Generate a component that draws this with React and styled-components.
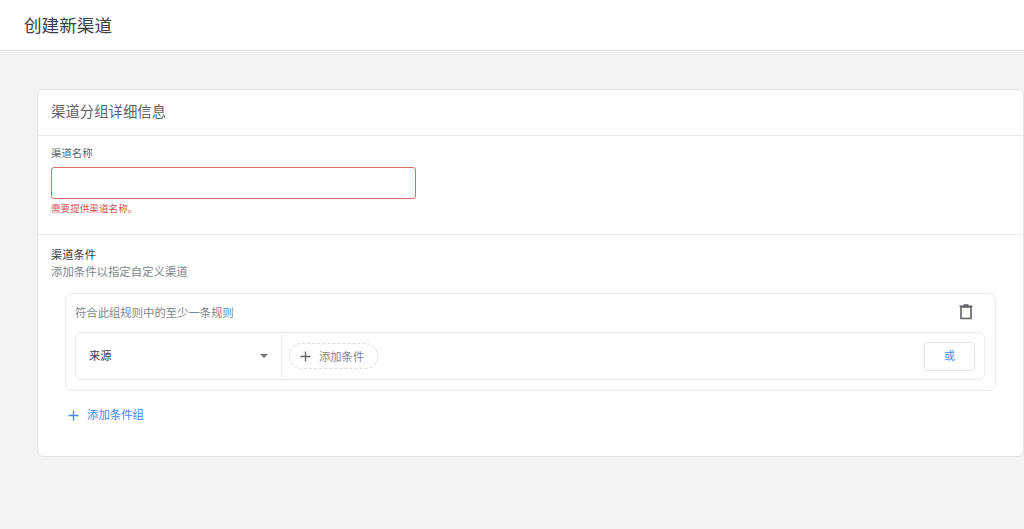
import React from "react";
import styled, { createGlobalStyle } from "styled-components";

const Global = createGlobalStyle`
  html, body { margin: 0; padding: 0; height: 100%; overflow: hidden; background: #f1f3f4; }
  * { box-sizing: border-box; }
  body { font-family: Roboto, "Noto Sans CJK SC", sans-serif; }
`;
const Page = styled.div`height: 529px; background: #f1f3f4;`;
const Header = styled.header`
  height: 51px; background: #fff; border-bottom: 1px solid #e4e5e7;
  padding: 0 0 0 24px; display: flex; align-items: center;
`;
const PageTitle = styled.h1`
  margin: 0 0 2px; font-size: 17.6px; font-weight: 400; color: #3c4043;
`;
const Card = styled.section`
  margin: 38px 0 0 37px; height: 368px; background: #fff;
  border: 1px solid #e3e4e6; border-radius: 6px;
`;
const CardTitle = styled.h2`
  margin: 0; height: 46px; padding: 0 13px 5px; display: flex; align-items: center;
  font-size: 14.4px; font-weight: 400; color: #5f6368;
  border-bottom: 1px solid #e8eaed;
`;
const NameSection = styled.div`
  height: 99px; padding: 11px 13px 0; border-bottom: 1px solid #e8eaed;
`;
const FieldLabel = styled.div`
  font-size: 10.4px; line-height: 14px; color: #5f6368;
`;
const TextInput = styled.input`
  display: block; margin-top: 6px; width: 365px; height: 32px; padding: 0 8px;
  border: 1px solid #df6b67; border-radius: 3px; background: #fff; outline: none;
`;
const ErrorText = styled.div`
  margin-top: 3px; font-size: 9.6px; line-height: 14px; color: #d9534f;
`;
const ConditionSection = styled.div`padding: 13px 13px 0;`;
const SectionTitle = styled.div`
  font-size: 11.25px; line-height: 16px; color: #3c4043;
`;
const SectionHint = styled.div`
  font-size: 11.4px; line-height: 16px; color: #80868b;
`;
const GroupBox = styled.div`
  margin: 13px 14px 0 14px; height: 98px; padding: 0 10px 0 9px;
  border: 1px solid #e8eaed; border-radius: 7px;
`;
const GroupHead = styled.div`
  height: 38px; display: flex; align-items: center; justify-content: space-between;
  padding: 0 12px 2px 0;
`;
const GroupText = styled.span`font-size: 11.35px; color: #80868b;`;
const IconButton = styled.span`display: flex; color: #5f6368;`;
const RuleRow = styled.div`
  height: 48px; display: flex; align-items: center;
  border: 1px solid #e8eaed; border-radius: 6px;
`;
const SourceSelect = styled.div`
  width: 206px; height: 100%; padding: 0 13px 2px; display: flex; align-items: center;
  justify-content: space-between; border-right: 1px solid #e8eaed;
  font-size: 11.25px; color: #3c4043;
`;
const Caret = styled.span`
  width: 0; height: 0; margin-top: 2px; border-left: 4px solid transparent; border-right: 4px solid transparent;
  border-top: 4px solid #70757a;
`;
const AddPill = styled.button`
  margin-left: 7px; width: 89px; height: 26px; padding: 0 0 0 10px; display: flex; align-items: center; gap: 8px;
  background: #fff; border: 1px dashed #dadce0; border-radius: 13px;
  font: inherit; font-size: 11.3px; color: #80868b;
`;
const OrButton = styled.button`
  margin-left: auto; margin-right: 9px; width: 51px; height: 29px; padding: 0 0 2px; background: #fff;
  border: 1px solid #e3e4e6; border-radius: 3px; font: inherit; font-size: 11px; color: #4285f4;
`;
const AddGroup = styled.button`
  margin: 16px 0 0 17px; padding: 0; display: flex; align-items: center; gap: 8px;
  background: none; border: none; font: inherit; font-size: 11.4px; line-height: 16px; color: #4285f4;
`;

const Plus = ({ color }) => (
  <svg width="11" height="11" viewBox="0 0 11 11" aria-hidden="true">
    <path d="M5.5 0.5v10M0.5 5.5h10" stroke={color} strokeWidth="1.3" fill="none" />
  </svg>
);
const Trash = () => (
  <svg width="14" height="16" viewBox="0 0 14 16" aria-hidden="true">
    <path d="M2 3h10v11.5H2z" stroke="#5f6368" strokeWidth="1.6" fill="none" />
    <path d="M0.5 2.2h13M4.5 1h5" stroke="#5f6368" strokeWidth="1.5" fill="none" />
  </svg>
);

export default function App() {
  return (
    <Page>
      <Global />
      <Header><PageTitle>创建新渠道</PageTitle></Header>
      <Card>
        <CardTitle>渠道分组详细信息</CardTitle>
        <NameSection>
          <FieldLabel>渠道名称</FieldLabel>
          <TextInput aria-label="渠道名称" />
          <ErrorText>需要提供渠道名称。</ErrorText>
        </NameSection>
        <ConditionSection>
          <SectionTitle>渠道条件</SectionTitle>
          <SectionHint>添加条件以指定自定义渠道</SectionHint>
          <GroupBox>
            <GroupHead>
              <GroupText>符合此组规则中的至少一条规则</GroupText>
              <IconButton><Trash /></IconButton>
            </GroupHead>
            <RuleRow>
              <SourceSelect>来源<Caret /></SourceSelect>
              <AddPill><Plus color="#5f6368" />添加条件</AddPill>
              <OrButton>或</OrButton>
            </RuleRow>
          </GroupBox>
          <AddGroup><Plus color="#4285f4" />添加条件组</AddGroup>
        </ConditionSection>
      </Card>
    </Page>
  );
}
